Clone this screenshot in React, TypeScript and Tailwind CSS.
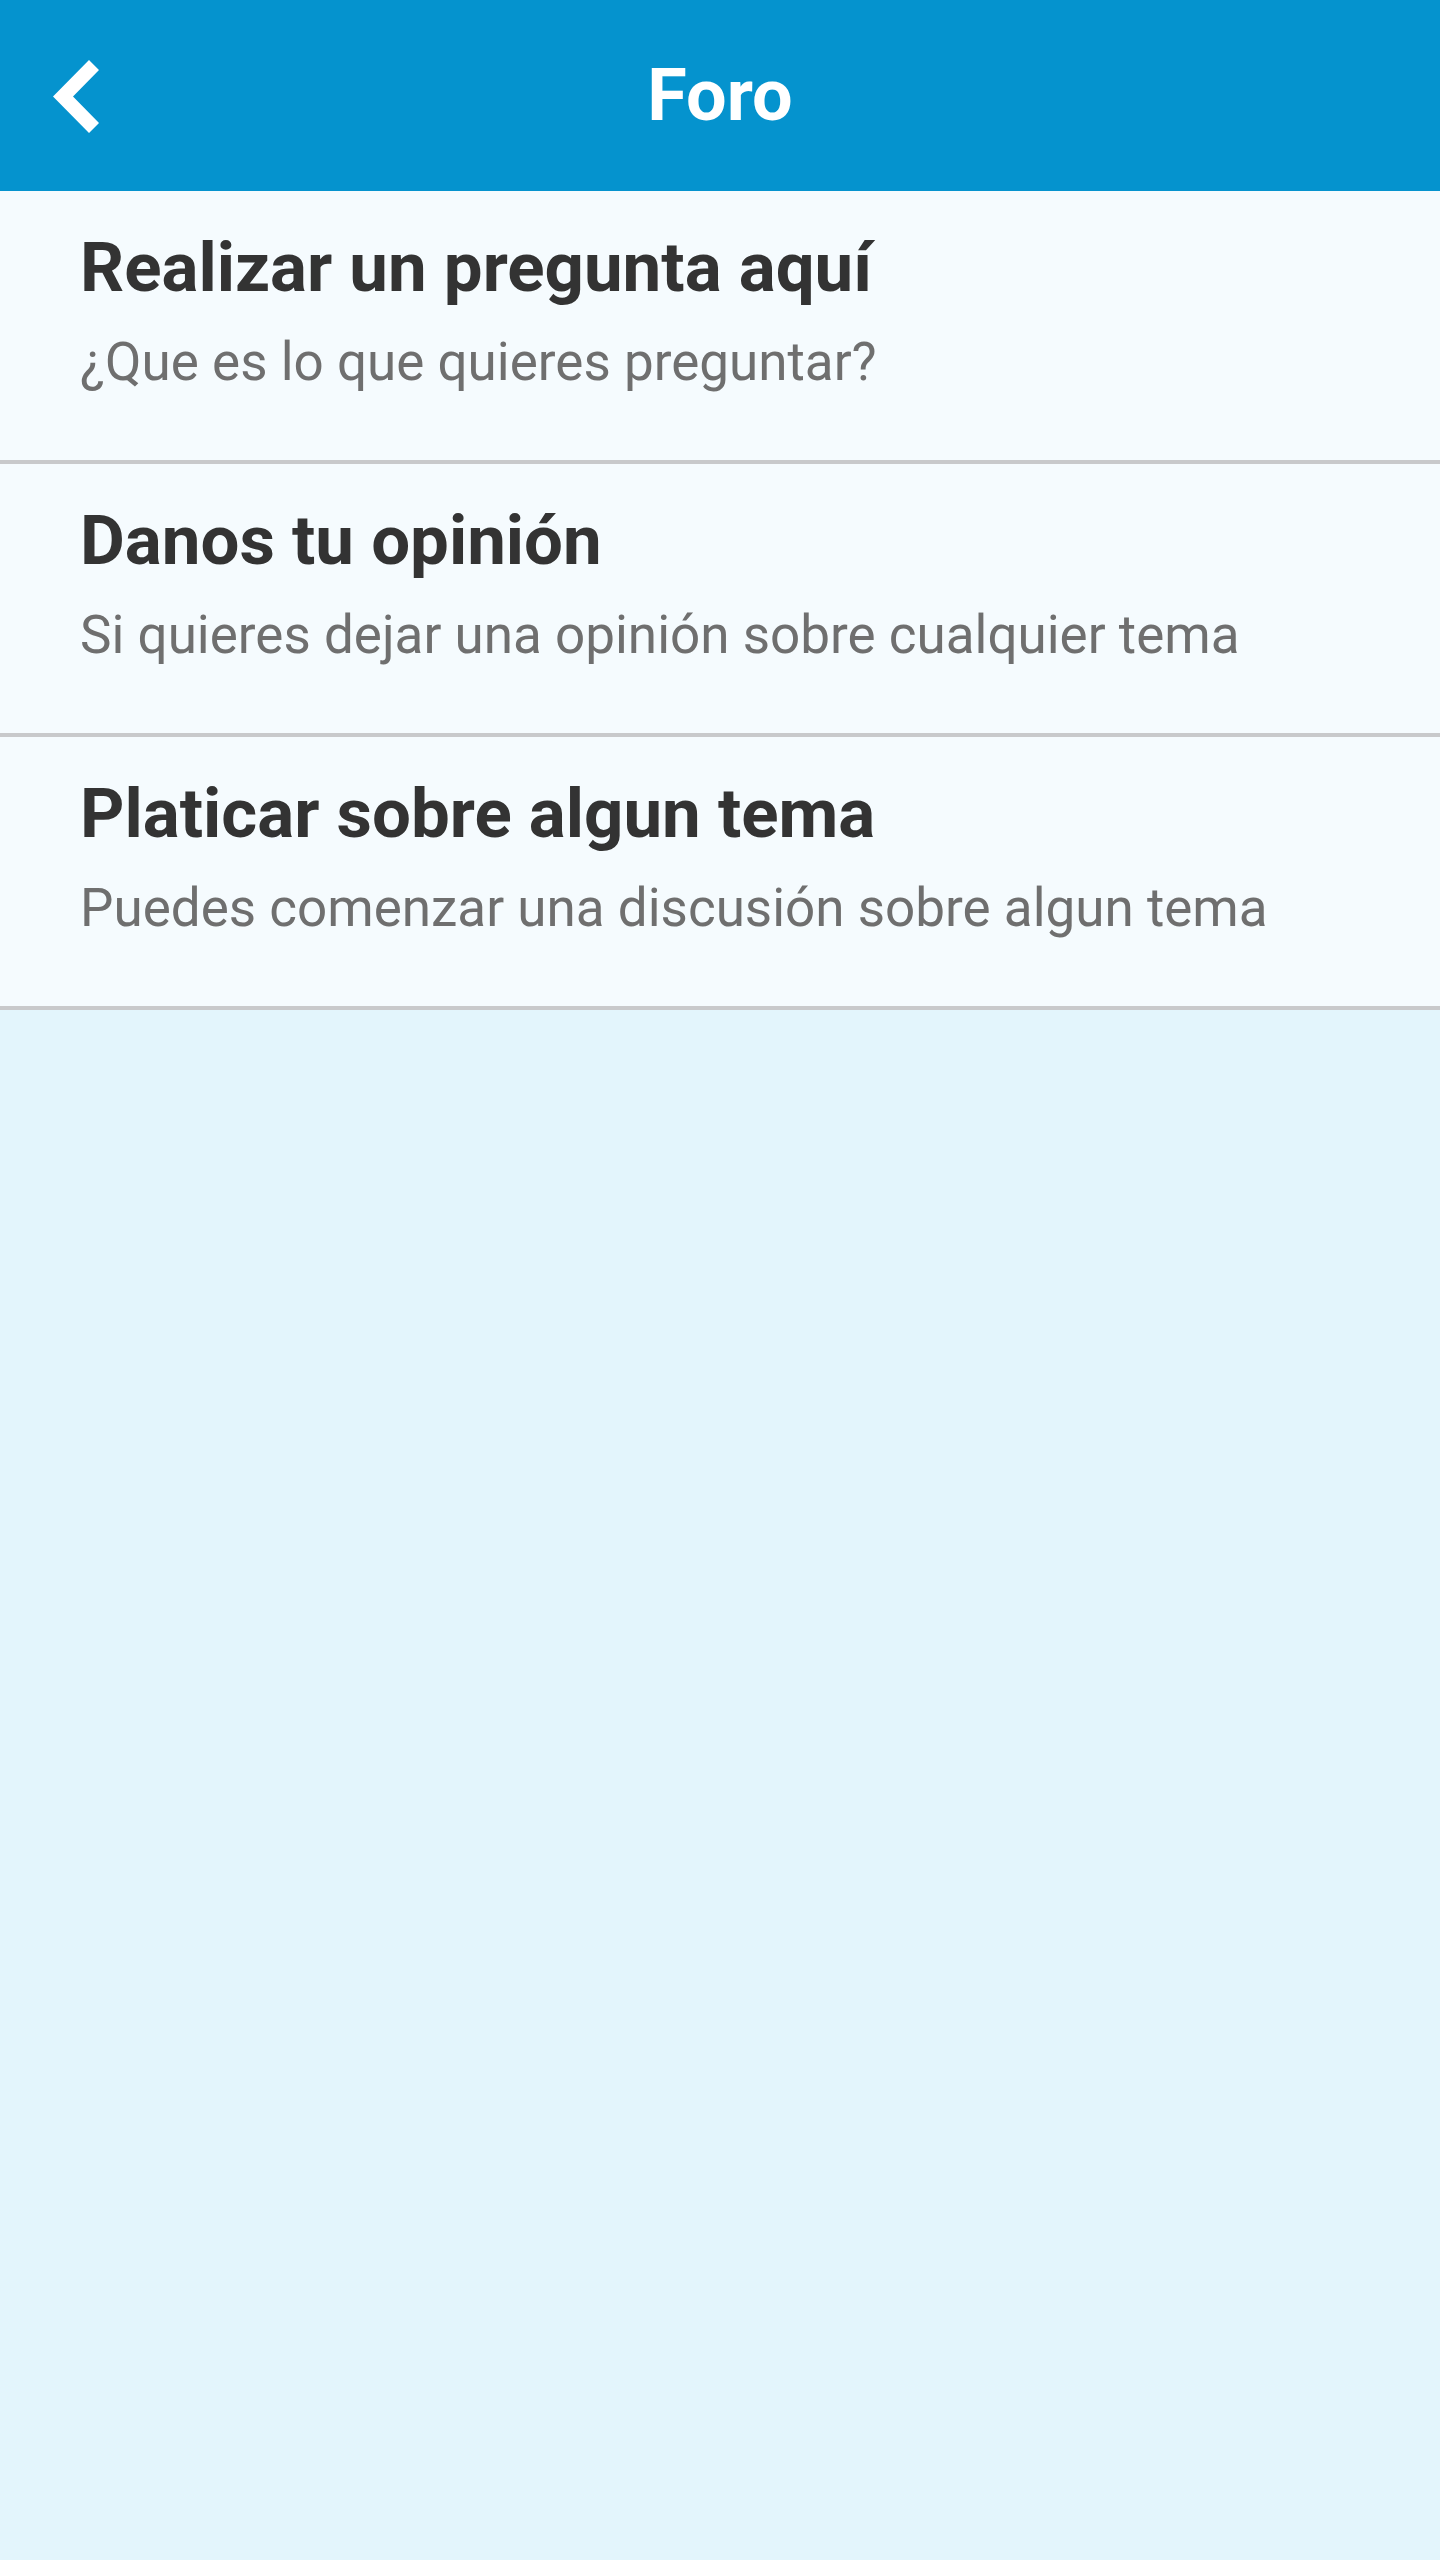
import React from "react";

const items = [
  { title: "Realizar un pregunta aquí", sub: "¿Que es lo que quieres preguntar?" },
  { title: "Danos tu opinión", sub: "Si quieres dejar una opinión sobre cualquier tema" },
  { title: "Platicar sobre algun tema", sub: "Puedes comenzar una discusión sobre algun tema" },
];

export default function App() {
  return (
    <div
      className="min-h-[2560px] w-[1440px] bg-[#E3F5FC]"
      style={{ fontFamily: "Roboto, 'Noto Sans', sans-serif" }}
    >
      <header className="relative flex h-[191px] items-center justify-center bg-[#0593CE]">
        <button className="absolute left-0 top-0 h-[191px] w-[150px]" aria-label="Atrás">
          <svg width="150" height="191" viewBox="0 0 150 191" className="block">
            <polygon points="89,60 99,70 73,96.5 99,123 89,133 53,96.5" fill="#ffffff" />
          </svg>
        </button>
        <h1 className="text-[72px] font-bold leading-[72px] text-white">Foro</h1>
      </header>
      <ul>
        {items.map((it) => (
          <li
            key={it.title}
            className="h-[273px] border-b-4 border-[#C8C9CB] bg-[#F5FBFE] pl-[80px] pt-[37px]"
          >
            <div className="text-[69px] font-bold leading-[80px] text-[#333333]">{it.title}</div>
            <div className="mt-[24px] text-[53px] leading-[60px] text-[#6F6F6F]">{it.sub}</div>
          </li>
        ))}
      </ul>
    </div>
  );
}
